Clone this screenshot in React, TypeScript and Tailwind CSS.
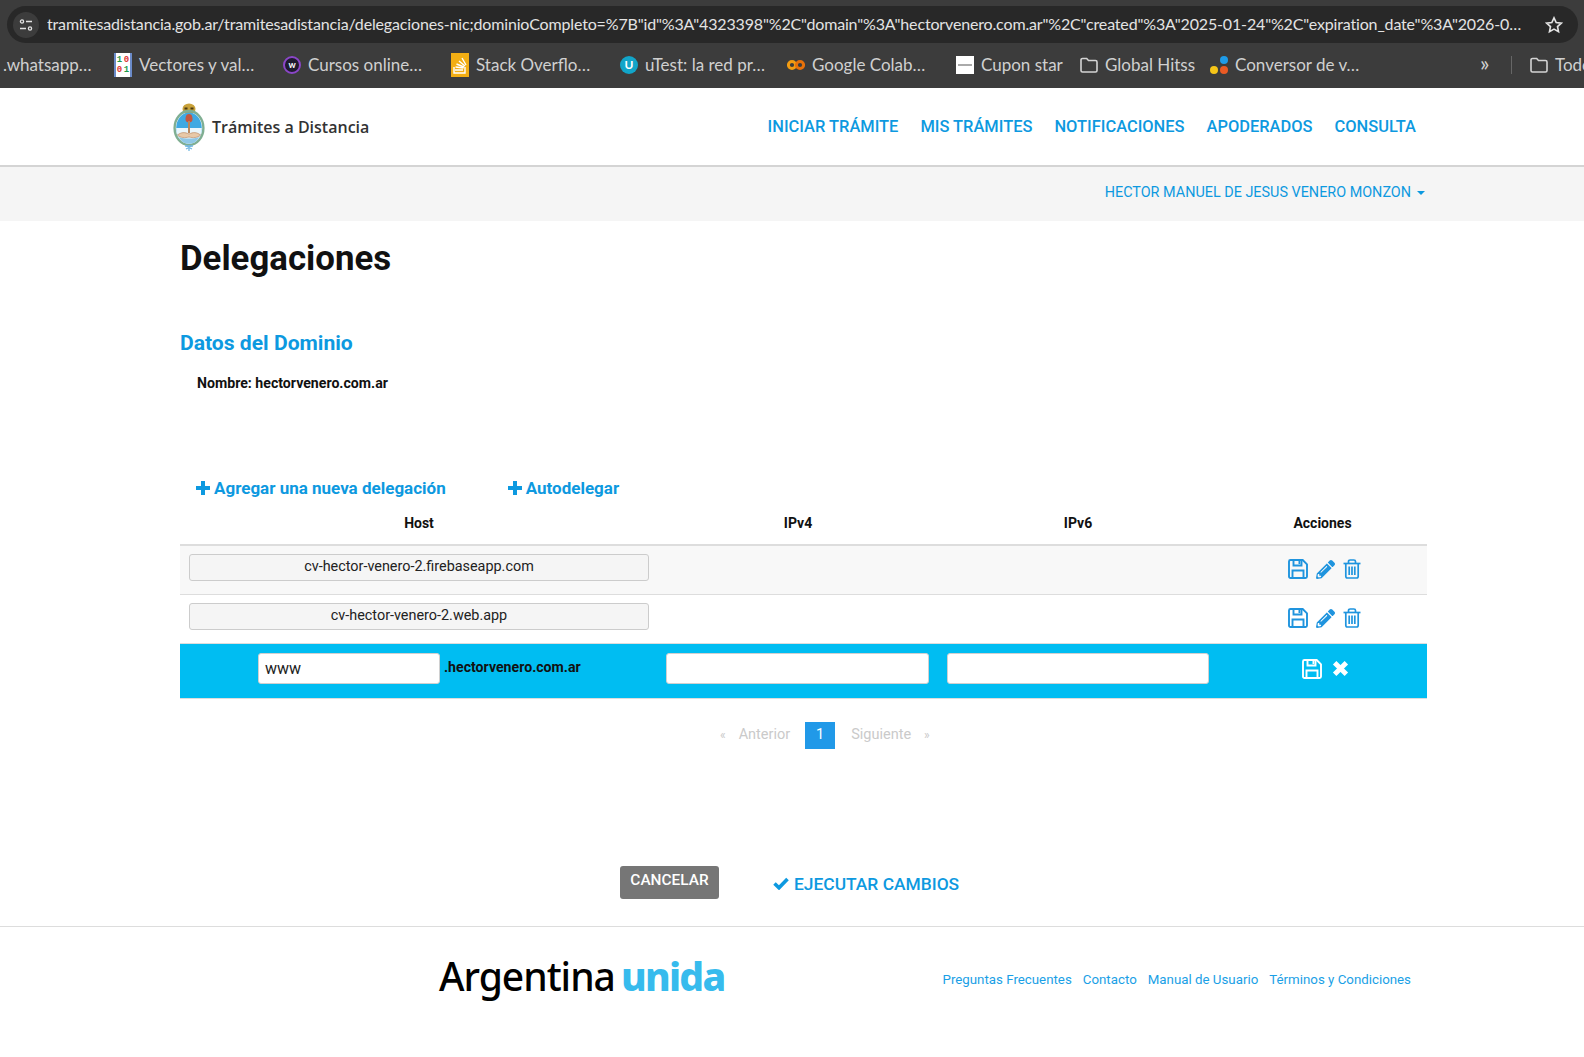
import React from "react";
import { FaPencilAlt } from "react-icons/fa";

const Floppy = ({ c = "#1f94de" }: { c?: string }) => (
  <svg width="20" height="20" viewBox="0 0 20 20" fill="none" stroke={c} strokeWidth="1.9">
    <path d="M2.5 1h12.2L19 5.3V17.5a1.5 1.5 0 0 1-1.5 1.5h-15A1.5 1.5 0 0 1 1 17.5v-15A1.5 1.5 0 0 1 2.5 1z" />
    <path d="M5.5 1v5.5h8V1" />
    <path d="M4.5 19v-7.5h11V19" />
    <rect x="10.5" y="2" width="1.8" height="3" fill={c} stroke="none" />
  </svg>
);

const Trash = () => (
  <svg width="18" height="20" viewBox="0 0 18 20" fill="none" stroke="#1f94de" strokeWidth="1.7">
    <path d="M0.5 4.5h17" />
    <path d="M5.5 4.5V2.6A1.6 1.6 0 0 1 7.1 1h3.8a1.6 1.6 0 0 1 1.6 1.6v1.9" />
    <path d="M2.8 4.5V17.3A1.7 1.7 0 0 0 4.5 19h9a1.7 1.7 0 0 0 1.7-1.7V4.5" />
    <path d="M6.2 7.5v8.5M9 7.5v8.5M11.8 7.5v8.5" />
  </svg>
);

const Plus = () => (
  <svg width="14" height="14" viewBox="0 0 14 14" fill="currentColor" className="shrink-0">
    <path d="M5 0h4v5h5v4H9v5H5V9H0V5h5z" />
  </svg>
);

const Check = () => (
  <svg width="16" height="13" viewBox="0 0 16 13" fill="none" stroke="currentColor" strokeWidth="3.6" className="shrink-0">
    <path d="M1.5 6.5l4.5 4.3L14.5 2" />
  </svg>
);

const Times = () => (
  <svg width="17" height="17" viewBox="0 0 16 16" fill="none" stroke="#ffffff" strokeWidth="4.6" className="shrink-0">
    <path d="M2.5 2.5l11 11M13.5 2.5l-11 11" />
  </svg>
);

const Escudo = () => (
  <svg width="32" height="48" viewBox="0 0 32 48" className="shrink-0">
    <ellipse cx="16" cy="6" rx="6.5" ry="5.5" fill="#c9a23a" />
    <rect x="11.5" y="4.5" width="3" height="2" fill="#4a3a12" />
    <rect x="17.5" y="4.5" width="3" height="2" fill="#4a3a12" />
    <ellipse cx="16" cy="25" rx="14.4" ry="17" fill="none" stroke="#7fae92" strokeWidth="2.4" />
    <ellipse cx="16" cy="25" rx="12.8" ry="15.6" fill="#3fa9e2" />
    <path d="M3.2 25h25.6c0 8.6-5.7 15.6-12.8 15.6S3.2 33.6 3.2 25z" fill="#eaf6fb" />
    <path d="M6 34c3 6 6.5 6.6 10 6.6s7-.6 10-6.6c-5 2-15 2-20 0z" fill="#8fc8e6" />
    <path d="M16 11c3 0 3.5 3 3.5 5.5 0 2-1.5 3-3.5 3s-3.5-1-3.500-3c0-2.500.5-5.500 3.500-5.500z" fill="#c4573f" />
    <rect x="15" y="18" width="2" height="12" fill="#b9875b" />
    <path d="M4.500 32c4-3 7-3 11.500-1 4.500-2 7.500-2 11.500 1-3 3-7.500 3-11.500 2-4 1-8.500 1-11.500-2z" fill="#e8c9a8" stroke="#b5835c" strokeWidth="0.6" />
    <path d="M12 43h8M13 46l6-3M19 46l-6-3M16 42v6" stroke="#74b9e2" strokeWidth="1.3" />
  </svg>
);

const Fav = ({ k }: { k: string }) => {
  if (k === "vec")
    return (
      <div className="w-[18px] h-[24px] bg-white shrink-0 grid grid-cols-2 content-center text-center text-[9px] leading-[10px] font-bold text-[#1d9a4b] border-x-2 border-[#6b8bc9] [font-family:'Liberation_Mono',monospace]">
        <span>1</span><span className="text-[#d33]">0</span><span className="text-[#d33]">0</span><span>1</span>
      </div>
    );
  if (k === "w")
    return (
      <div className="w-[18px] h-[18px] rounded-full bg-[#1f1b2e] border-2 border-[#8b46c8] shrink-0 flex items-center justify-center text-white text-[9px] font-bold leading-none">w</div>
    );
  if (k === "so")
    return (
      <svg width="18" height="24" viewBox="0 0 18 24" className="shrink-0">
        <rect width="18" height="24" fill="#f2ae14" />
        <path d="M4 17h8M4.500 14l8 1M5.500 11l7.500 3M8 8l6 5M11 5l4 7" stroke="#fff" strokeWidth="1.4" />
        <path d="M3 14v6h11v-6" fill="none" stroke="#fff" strokeWidth="1.4" />
      </svg>
    );
  if (k === "u")
    return (
      <div className="w-[18px] h-[18px] rounded-full bg-[#12a5c9] shrink-0 flex items-center justify-center text-white text-[12px] font-bold leading-none">U</div>
    );
  if (k === "co")
    return (
      <svg width="18" height="12" viewBox="0 0 18 12" className="shrink-0" fill="none" strokeWidth="3">
        <circle cx="5" cy="6" r="3.6" stroke="#f39c12" />
        <circle cx="13" cy="6" r="3.6" stroke="#e8710a" />
      </svg>
    );
  if (k === "cu")
    return (
      <div className="w-[18px] h-[18px] bg-white shrink-0 flex items-center justify-center">
        <div className="w-[14px] h-[2px] bg-[#aaa]" />
      </div>
    );
  if (k === "fo")
    return (
      <svg width="18" height="16" viewBox="0 0 18 16" fill="none" stroke="#d4d4d4" strokeWidth="1.6" className="shrink-0">
        <path d="M1 3a1.500 1.500 0 0 1 1.500-1.500h4.200L8.500 3.500h7A1.500 1.500 0 0 1 17 5v8.500a1.500 1.500 0 0 1-1.500 1.500h-13A1.500 1.500 0 0 1 1 13.500z" />
      </svg>
    );
  if (k === "cv")
    return (
      <svg width="18" height="20" viewBox="0 0 18 20" className="shrink-0">
        <circle cx="4" cy="15" r="4" fill="#f5c518" />
        <circle cx="14" cy="5" r="4" fill="#1e9be8" />
        <circle cx="14" cy="15" r="4" fill="#ea5a24" />
      </svg>
    );
  return null;
};

const marks = [
  { t: ".whatsapp…", k: "", w: 114 },
  { t: "Vectores y val…", k: "vec", w: 169 },
  { t: "Cursos online…", k: "w", w: 168 },
  { t: "Stack Overflo…", k: "so", w: 169 },
  { t: "uTest: la red pr…", k: "u", w: 167 },
  { t: "Google Colab…", k: "co", w: 169 },
  { t: "Cupon star", k: "cu", w: 124 },
  { t: "Global Hitss", k: "fo", w: 130 },
  { t: "Conversor de v…", k: "cv", w: 282 },
];

const cellInput = "h-[27px] rounded-[3px] border border-[#cccccc] bg-[#f5f5f5] text-center text-[14.4px] leading-[23px] text-[#222]";
const whiteInput = "h-[31px] rounded-[3px] border border-[#d0d0d0] bg-white";
const blue = "text-[#0d99e0]";

const Row = ({ host, alt }: { host: string; alt?: boolean }) => (
  <tr className={`h-[49px] border-b border-[#dddddd] ${alt ? "bg-[#f8f8f8]" : "bg-white"}`}>
    <td className="px-[9px] pb-[5px]">
      <div className={cellInput}>{host}</div>
    </td>
    <td />
    <td />
    <td className="pb-[1px]">
      <div className="flex items-center justify-center gap-[8px] pl-[4px]">
        <Floppy />
        <FaPencilAlt className="text-[#1f94de] text-[19px]" />
        <Trash />
      </div>
    </td>
  </tr>
);

export default function App() {
  return (
    <div className="min-h-[1057px] bg-white [font-family:Roboto,sans-serif] overflow-hidden">
      {/* Browser chrome */}
      <div className="h-[88px] bg-[#3c3c3c] [font-family:Lato,sans-serif]">
        <div className="pt-[6px] pl-[7px] pr-[6px]">
          <div className="h-[37px] rounded-full bg-[#282828] flex items-center pl-[6px] pr-[15px]">
            <div className="w-[26px] h-[26px] rounded-full bg-[#3c3c3c] flex items-center justify-center shrink-0">
              <svg width="14" height="14" viewBox="0 0 14 14" fill="none" stroke="#e3e3e3" strokeWidth="1.3">
                <circle cx="3" cy="3.5" r="1.6" />
                <path d="M7 3.5h6M1 10.5h6" />
                <circle cx="11" cy="10.5" r="1.6" />
              </svg>
            </div>
            <div className="ml-[8px] flex-1 min-w-0 whitespace-nowrap overflow-hidden pb-[2px] text-[16px] text-[#e3e3e3] tracking-[-0.155px]">
              tramitesadistancia.gob.ar/tramitesadistancia/delegaciones-nic;dominioCompleto=%7B"id"%3A"4323398"%2C"domain"%3A"hectorvenero.com.ar"%2C"created"%3A"2025-01-24"%2C"expiration_date"%3A"2026-0…
            </div>
            <svg width="18" height="18" viewBox="0 0 24 24" fill="none" stroke="#e3e3e3" strokeWidth="2.2" className="ml-[20px] shrink-0">
              <path d="M12 2.500l2.900 6.200 6.800.8-5 4.600 1.300 6.700L12 17.500 6 20.800l1.300-6.700-5-4.600 6.800-.8z" />
            </svg>
          </div>
        </div>
        <div className="h-[45px] flex items-center pb-[2px] text-[17px] text-[#d0d0d0] whitespace-nowrap overflow-hidden">
          {marks.map((m, i) => (
            <div key={i} className={`flex items-center gap-[7px] shrink-0 ${i === 0 ? "pl-[3px]" : ""}`} style={{ width: m.w }}>
              {m.k && <Fav k={m.k} />}
              <span>{m.t}</span>
            </div>
          ))}
          <span className="ml-[-12px] w-[31px] shrink-0 text-[#d0d0d0] text-[22px] leading-none pb-[3px]">»</span>
          <div className="w-px h-[18px] bg-[#666] shrink-0" />
          <div className="ml-[18px] flex items-center gap-[7px] shrink-0">
            <Fav k="fo" />
            <span>Todos</span>
          </div>
        </div>
      </div>

      {/* Site header */}
      <header className="h-[79px] bg-white border-b-2 border-[#d4d4d4] flex items-center pl-[173px] pr-[168px]">
        <Escudo />
        <span className="ml-[7px] [font-family:'Open_Sans',sans-serif] font-semibold text-[16px] text-[#333]">Trámites a Distancia</span>
        <nav className={`ml-auto flex gap-[22px] pt-[1px] text-[16.45px] font-medium ${blue}`}>
          <span>INICIAR TRÁMITE</span>
          <span>MIS TRÁMITES</span>
          <span>NOTIFICACIONES</span>
          <span>APODERADOS</span>
          <span>CONSULTA</span>
        </nav>
      </header>
      <div className={`h-[54px] bg-[#f5f5f5] flex items-center justify-end pr-[159px] pb-[2px] text-[14.4px] ${blue}`}>
        HECTOR MANUEL DE JESUS VENERO MONZON
        <span className="ml-[6px] w-0 h-0 border-x-[4px] border-x-transparent border-t-[4px] border-t-[#0d99e0]" />
      </div>

      <main className="px-[180px]">
        <div className="w-[1247px]">
          <h1 className="mt-[15px] text-[34.8px] leading-[44px] font-bold text-[#111]">Delegaciones</h1>
          <h2 className={`mt-[49px] text-[21.1px] leading-[28px] font-bold ${blue}`}>Datos del Dominio</h2>
          <p className="mt-[16px] pl-[17px] text-[14.15px] leading-[20px] font-bold text-[#111]">Nombre: hectorvenero.com.ar</p>

          <div className={`mt-[83px] pl-[16px] flex text-[17px] leading-[24px] font-bold ${blue}`}>
            <span className="flex items-center gap-[4px]"><Plus />Agregar una nueva delegación</span>
            <span className="ml-[62px] flex items-center gap-[4px]"><Plus />Autodelegar</span>
          </div>

          <table className="mt-[10px] w-full table-fixed border-collapse">
            <colgroup>
              <col className="w-[478px]" />
              <col className="w-[280px]" />
              <col className="w-[280px]" />
              <col />
            </colgroup>
            <thead>
              <tr className="h-[35px] border-b-2 border-[#dddddd] text-[14px] font-bold text-[#111]">
                <th className="pb-[8px]">Host</th>
                <th className="pb-[8px]">IPv4</th>
                <th className="pb-[8px]">IPv6</th>
                <th className="pb-[8px]">Acciones</th>
              </tr>
            </thead>
            <tbody>
              <Row host="cv-hector-venero-2.firebaseapp.com" alt />
              <Row host="cv-hector-venero-2.web.app" />
              <tr className="h-[55px] bg-[#00bdf2] border-b border-[#dddddd]">
                <td className="pb-[4px]">
                  <div className="flex items-center pl-[78px]">
                    <div className={`${whiteInput} w-[182px] px-[6px] text-[16px] leading-[29px] text-[#222]`}>www</div>
                    <span className="ml-[4px] text-[14.15px] font-bold text-[#111] -mt-[2px]">.hectorvenero.com.ar</span>
                  </div>
                </td>
                <td className="pl-[8px] pr-[9px] pb-[4px]"><div className={whiteInput} /></td>
                <td className="px-[9px] pb-[4px]"><div className={whiteInput} /></td>
                <td className="pb-[4px]">
                  <div className="flex items-center justify-center gap-[10px] pl-[5px]">
                    <Floppy c="#ffffff" />
                    <Times />
                  </div>
                </td>
              </tr>
            </tbody>
          </table>

          <div className="mt-[23px] pl-[540px] flex items-center h-[27px] text-[14.5px] text-[#cacaca]">
            <span className="text-[12px]">«</span>
            <span className="ml-[13px]">Anterior</span>
            <span className="ml-[15px] w-[30px] h-[27px] bg-[#2199e8] text-white flex items-center justify-center">1</span>
            <span className="ml-[16px]">Siguiente</span>
            <span className="ml-[13px] text-[12px]">»</span>
          </div>

          <div className="mt-[117px] flex items-start pl-[440px] h-[33px]">
            <span className="w-[99px] h-[33px] rounded-[3px] bg-[#767676] text-white text-[15.4px] font-medium flex items-center justify-center pb-[2px]">CANCELAR</span>
            <span className={`ml-[54px] flex items-center gap-[5px] text-[17.4px] leading-[20px] font-medium mt-[8px] ${blue}`}><Check />EJECUTAR CAMBIOS</span>
          </div>
        </div>
      </main>

      <footer className="mt-[27px] border-t border-[#dddddd] h-[100px] flex items-center pl-[439px] pr-[173px]">
        <div className="[font-family:'Noto_Sans',sans-serif] text-[39px] leading-none whitespace-nowrap pb-[1px] tracking-[-1px]">
          <span className="font-medium text-black">Argentina</span>
          <span className="ml-[6px] font-extrabold text-[#37bbed] tracking-[-1.7px]">unida</span>
        </div>
        <div className="ml-auto flex gap-[11px] text-[13.3px] text-[#1a9fe6] pt-[8px]">
          <span>Preguntas Frecuentes</span>
          <span>Contacto</span>
          <span>Manual de Usuario</span>
          <span>Términos y Condiciones</span>
        </div>
      </footer>
    </div>
  );
}
